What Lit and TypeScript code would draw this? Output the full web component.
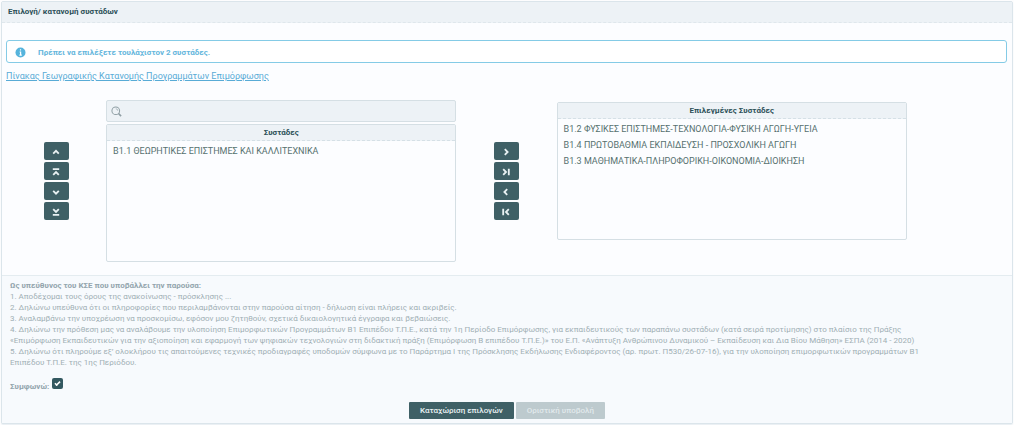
import { LitElement, html, css, svg } from "lit";
import { customElement, property, state } from "lit/decorators.js";

type Move = { label: string; icon: unknown };

const SORT_MOVES: Move[] = [
  { label: "Πάνω", icon: svg`<path d="M1.5 7 5 3.5 8.5 7"/>` },
  { label: "Στην αρχή", icon: svg`<path d="M1 1.5h8M1.5 8.5 5 5 8.5 8.5"/>` },
  { label: "Κάτω", icon: svg`<path d="M1.5 3.5 5 7 8.5 3.5"/>` },
  { label: "Στο τέλος", icon: svg`<path d="M1.5 1.5 5 5 8.5 1.5M1 8.5h8"/>` },
];

const TRANSFER_MOVES: Move[] = [
  { label: "Προσθήκη", icon: svg`<path d="M3.5 1.5 7 5 3.5 8.5"/>` },
  { label: "Προσθήκη όλων", icon: svg`<path d="M1.5 1.5 5 5 1.5 8.5M8.5 1v8"/>` },
  { label: "Αφαίρεση", icon: svg`<path d="M6.5 1.5 3 5 6.5 8.5"/>` },
  { label: "Αφαίρεση όλων", icon: svg`<path d="M8.5 1.5 5 5 8.5 8.5M1.5 1v8"/>` },
];

const TERMS = [
  "1. Αποδέχομαι τους όρους της ανακοίνωσης - πρόσκλησης ...",
  "2. Δηλώνω υπεύθυνα ότι οι πληροφορίες που περιλαμβάνονται στην παρούσα αίτηση - δήλωση είναι πλήρεις και ακριβείς.",
  "3. Αναλαμβάνω την υποχρέωση να προσκομίσω, εφόσον μου ζητηθούν, σχετικά δικαιολογητικά έγγραφα και βεβαιώσεις.",
  "4. Δηλώνω την πρόθεση μας να αναλάβουμε την υλοποίηση Επιμορφωτικών Προγραμμάτων Β1 Επιπέδου Τ.Π.Ε., κατά την 1η Περίοδο Επιμόρφωσης, για εκπαιδευτικούς των παραπάνω συστάδων (κατά σειρά προτίμησης) στο πλαίσιο της Πράξης «Επιμόρφωση Εκπαιδευτικών για την αξιοποίηση και εφαρμογή των ψηφιακών τεχνολογιών στη διδακτική πράξη (Επιμόρφωση Β επιπέδου Τ.Π.Ε.)» του Ε.Π. «Ανάπτυξη Ανθρώπινου Δυναμικού – Εκπαίδευση και Δια Βίου Μάθηση» ΕΣΠΑ (2014 - 2020)",
  "5. Δηλώνω ότι πληρούμε εξ’ ολοκλήρου τις απαιτούμενες τεχνικές προδιαγραφές υποδομών σύμφωνα με το Παράρτημα Ι της Πρόσκλησης Εκδήλωσης Ενδιαφέροντος (αρ. πρωτ. Π530/26-07-16), για την υλοποίηση επιμορφωτικών προγραμμάτων Β1 Επιπέδου Τ.Π.Ε. της 1ης Περιόδου.",
];

@customElement("move-buttons")
class MoveButtons extends LitElement {
  @property({ attribute: false }) moves: Move[] = [];

  static styles = css`
    :host {
      display: flex;
      flex-direction: column;
      align-items: center;
      gap: 2px;
    }
    .move {
      display: grid;
      place-items: center;
      width: 25px;
      height: 18px;
      padding: 2px 0 0;
      border: 0;
      border-radius: 2px;
      background: #3f6066;
      cursor: pointer;
    }
    .glyph {
      width: 8px;
      height: 8px;
      fill: none;
      stroke: #e9f1f3;
      stroke-width: 2.3;
    }
  `;

  render() {
    return this.moves.map(
      (m) => html`<button class="move" type="button" aria-label=${m.label}>
        <svg class="glyph" viewBox="0 0 10 10" aria-hidden="true">${m.icon}</svg>
      </button>`
    );
  }
}

@customElement("cluster-list")
class ClusterList extends LitElement {
  @property() heading = "";
  @property({ attribute: false }) items: string[] = [];

  static styles = css`
    :host {
      display: block;
      border: 1px solid #d5dfe4;
      border-radius: 2px;
      background: #fcfdff;
    }
    .heading {
      margin: 0;
      border-bottom: 1px dashed #d5e0e6;
      background: #edf2f6;
      color: #2c5058;
      font-size: 8px;
      font-weight: 700;
      line-height: 15px;
      text-align: center;
    }
    .items {
      box-sizing: border-box;
      min-height: 120px;
      margin: 0;
      padding: 2px 6px 0;
      list-style: none;
    }
    .item {
      color: #56716f;
      font-size: 9px;
      line-height: 16px;
    }
  `;

  render() {
    return html`
      <h2 class="heading">${this.heading}</h2>
      <ul class="items">
        ${this.items.map((i) => html`<li class="item">${i}</li>`)}
      </ul>
    `;
  }
}

@customElement("app-root")
class AppRoot extends LitElement {
  @state() private agreed = true;

  static styles = css`
    :host {
      display: block;
      padding: 1px;
      background: #fdfdfe;
      font-family: Roboto, "Liberation Sans", sans-serif;
      font-size: 8px;
    }
    .panel {
      border: 1px solid #dbe5eb;
      border-radius: 2px;
      background: #fcfdff;
      box-shadow: 0 1px 1px #e9eff3;
    }
    .title {
      margin: 0;
      padding: 0 6px;
      border-bottom: 1px dashed #dfe7ec;
      background: #edf2f6;
      color: #2c5058;
      font-size: 8px;
      font-weight: 700;
      line-height: 20px;
    }
    .body {
      padding: 17px 5px 13px 4px;
    }
    .alert {
      display: flex;
      align-items: center;
      gap: 12px;
      padding: 0 8px;
      border: 1px solid #84cbe6;
      border-radius: 3px;
      background: #fff;
      color: #64b6dc;
      font-weight: 700;
      line-height: 21px;
    }
    .alert-text {
      padding-top: 2px;
      line-height: 19px;
    }
    .info {
      width: 11px;
      height: 11px;
      margin-top: 2px;
    }
    .link {
      display: table;
      margin-top: 6px;
      color: #58abd6;
      font-size: 9px;
      line-height: 14px;
    }
    .picker {
      display: grid;
      grid-template-columns: 10fr 35fr 10fr 35fr 10fr;
      align-items: center;
      margin-top: 17px;
    }
    .search {
      display: flex;
      align-items: center;
      gap: 4px;
      margin-bottom: 2px;
      padding: 0 4px;
      border: 1px solid #d5dfe4;
      border-radius: 2px;
      background: #edf2f6;
    }
    .lens {
      flex: none;
      width: 11px;
      height: 11px;
      fill: none;
      stroke: #8f9ea4;
      stroke-width: 1.1;
    }
    .query {
      flex: 1;
      min-width: 0;
      height: 20px;
      padding: 0;
      border: 0;
      outline: 0;
      background: transparent;
      color: #56716f;
      font: inherit;
    }
    .chosen {
      align-self: start;
      margin-top: 2px;
    }
    .terms {
      padding: 4px 8px;
      border-top: 1px solid #e4ecf0;
      background: #f7fafd;
      color: #9fafb4;
      line-height: 11px;
    }
    .term {
      margin: 0;
      padding-right: 7%;
    }
    .lead {
      margin: 0;
      font-weight: 700;
      color: #93a5ad;
    }
    .agree {
      display: flex;
      align-items: center;
      gap: 3px;
      margin-top: 10px;
      font-weight: 700;
      color: #93a5ad;
    }
    .agree-label {
      padding-top: 2px;
    }
    .tick {
      appearance: none;
      display: grid;
      place-items: center;
      width: 11px;
      height: 11px;
      margin: 0 0 4px;
      border-radius: 2px;
      background: #335860;
    }
    .tick:checked::before {
      content: "";
      width: 5px;
      height: 2px;
      margin-bottom: 2px;
      border: solid #fff;
      border-width: 0 0 2px 2px;
      box-sizing: content-box;
      transform: rotate(-45deg) scale(0.8);
    }
    .actions {
      display: flex;
      justify-content: center;
      gap: 2px;
      margin-top: 9px;
    }
    .action {
      height: 17px;
      padding: 0 11px;
      border: 0;
      border-radius: 1px;
      background: #3f6066;
      color: #e9f1f3;
      font: inherit;
      font-weight: 500;
    }
    .action:disabled {
      background: #bdcace;
      color: #e1e9ec;
    }
  `;

  render() {
    return html`
      <section class="panel">
        <h1 class="title">Επιλογή/ κατανομή συστάδων</h1>
        <div class="body">
          <div class="alert" role="status">
            <svg class="info" viewBox="0 0 11 11" aria-hidden="true">
              <circle cx="5.5" cy="5.5" r="5" fill="#56b4dc" />
              <path d="M5.5 2.2v1.4M4.6 5h1v3M4.4 8.2h2.4" fill="none" stroke="#fff" stroke-width="1.2" />
            </svg>
            <span class="alert-text">Πρέπει να επιλέξετε τουλάχιστον 2 συστάδες.</span>
          </div>
          <a class="link" href="#">Πίνακας Γεωγραφικής Κατανομής Προγραμμάτων Επιμόρφωσης</a>
          <div class="picker">
            <move-buttons .moves=${SORT_MOVES}></move-buttons>
            <div>
              <label class="search">
                <svg class="lens" viewBox="0 0 12 12" aria-hidden="true">
                  <circle cx="5.2" cy="5.2" r="4.2" />
                  <path d="M5.2 3a2.2 2.2 0 0 1 2.2 2.2" stroke-width=".7" />
                  <path d="M8.2 8.2 11 11" stroke-width="1.8" />
                </svg>
                <input class="query" type="text" aria-label="Αναζήτηση" />
              </label>
              <cluster-list
                heading="Συστάδες"
                .items=${["Β1.1 ΘΕΩΡΗΤΙΚΕΣ ΕΠΙΣΤΗΜΕΣ ΚΑΙ ΚΑΛΛΙΤΕΧΝΙΚΑ"]}
              ></cluster-list>
            </div>
            <move-buttons .moves=${TRANSFER_MOVES}></move-buttons>
            <cluster-list
              class="chosen"
              heading="Επιλεγμένες Συστάδες"
              .items=${[
                "Β1.2 ΦΥΣΙΚΕΣ ΕΠΙΣΤΗΜΕΣ-ΤΕΧΝΟΛΟΓΙΑ-ΦΥΣΙΚΗ ΑΓΩΓΗ-ΥΓΕΙΑ",
                "Β1.4 ΠΡΩΤΟΒΑΘΜΙΑ ΕΚΠΑΙΔΕΥΣΗ - ΠΡΟΣΧΟΛΙΚΗ ΑΓΩΓΗ",
                "Β1.3 ΜΑΘΗΜΑΤΙΚΑ-ΠΛΗΡΟΦΟΡΙΚΗ-ΟΙΚΟΝΟΜΙΑ-ΔΙΟΙΚΗΣΗ",
              ]}
            ></cluster-list>
          </div>
        </div>
        <form class="terms" @submit=${(e: Event) => e.preventDefault()}>
          <p class="lead">Ως υπεύθυνος του ΚΣΕ που υποβάλλει την παρούσα:</p>
          ${TERMS.map((t) => html`<p class="term">${t}</p>`)}
          <div class="agree">
            <label class="agree-label" for="agree">Συμφωνώ:</label>
            <input
              id="agree"
              class="tick"
              type="checkbox"
              .checked=${this.agreed}
              @change=${(e: Event) => (this.agreed = (e.target as HTMLInputElement).checked)}
            />
          </div>
          <div class="actions">
            <button class="action" type="submit">Καταχώριση επιλογών</button>
            <button class="action" type="button" disabled>Οριστική υποβολή</button>
          </div>
        </form>
      </section>
    `;
  }
}
